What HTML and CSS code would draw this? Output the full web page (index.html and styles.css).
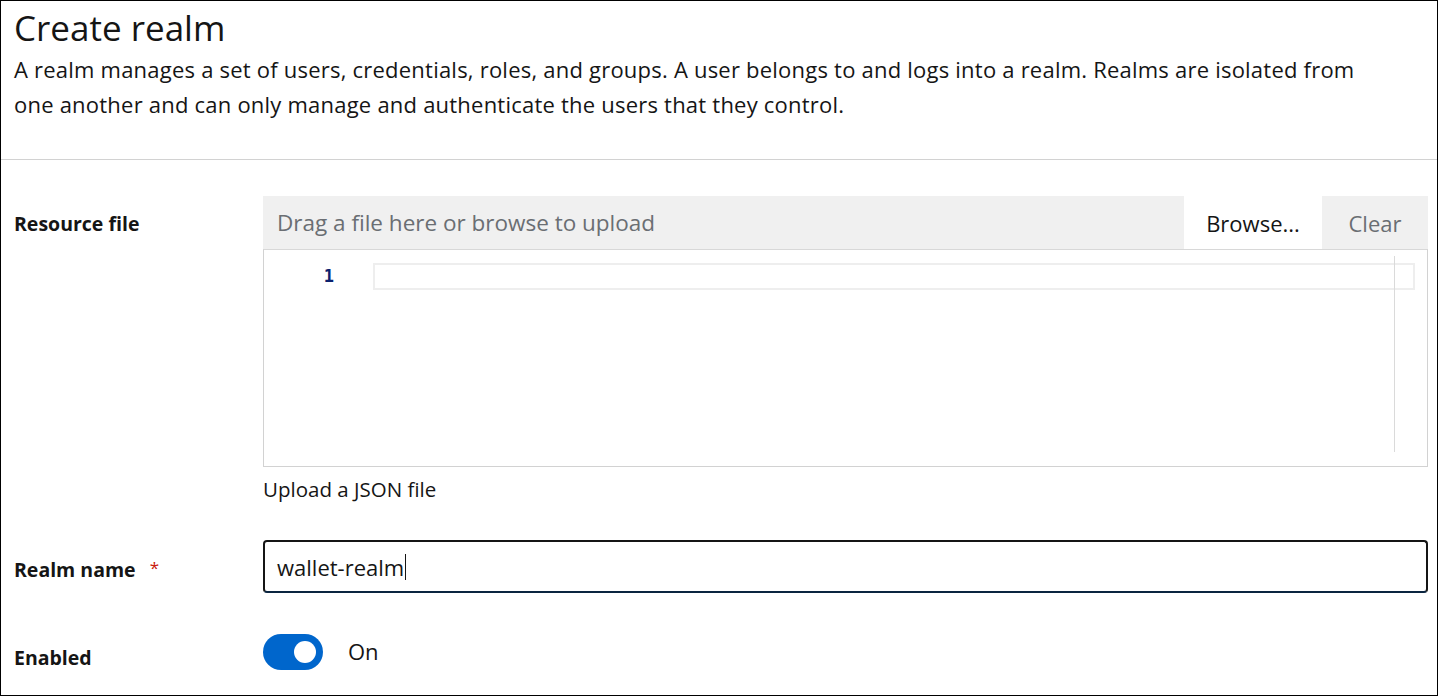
FILE: index.html
```html
<!DOCTYPE html>
<html lang="en">
<head>
<meta charset="utf-8">
<title>Create realm</title>
<link rel="stylesheet" href="styles.css">
</head>
<body>
<div class="frame">
  <header class="page-header">
    <h1 class="title">Create realm</h1>
    <p class="desc">A realm manages a set of users, credentials, roles, and groups. A user belongs to and logs into a realm. Realms are isolated from one another and can only manage and authenticate the users that they control.</p>
  </header>
  <form class="form">
    <div class="row row-file">
      <label class="label">Resource file</label>
      <div class="control">
        <div class="upload-bar">
          <span class="placeholder">Drag a file here or browse to upload</span>
          <button type="button" class="btn btn-browse">Browse...</button>
          <button type="button" class="btn btn-clear">Clear</button>
        </div>
        <div class="editor">
          <div class="gutter"><span class="ln">1</span></div>
          <div class="code"><div class="current-line"></div></div>
          <div class="ruler"></div>
        </div>
        <div class="helper">Upload a JSON file</div>
      </div>
    </div>
    <div class="row row-name">
      <label class="label">Realm name <span class="req">*</span></label>
      <div class="control">
        <div class="text-input"><span class="value">wallet-realm</span><span class="caret"></span></div>
      </div>
    </div>
    <div class="row row-enabled">
      <label class="label">Enabled</label>
      <div class="control switch-wrap">
        <span class="switch"><span class="knob"></span></span>
        <span class="switch-text">On</span>
      </div>
    </div>
  </form>
</div>
</body>
</html>
```
FILE: styles.css
```css
* { box-sizing: border-box; }
html, body { margin: 0; padding: 0; background: #fff; }
body {
  font-family: "Open Sans", "Liberation Sans", sans-serif;
  color: #151515;
}
.frame {
  width: 1438px;
  height: 696px;
  border: 1px solid #000;
  overflow: hidden;
  background: #fff;
}
.page-header {
  padding: 9px 9px 0 13px;
  height: 159px;
  border-bottom: 1px solid #d2d2d2;
}
.title {
  margin: 0;
  font-size: 35px;
  font-weight: 400;
  line-height: 36px;
  color: #151515;
}
.desc {
  margin: 6px 0 0;
  font-size: 22px;
  line-height: 35px;
  letter-spacing: 0.22px;
  max-width: 1375px;
  color: #151515;
}
.form {
  padding: 36px 9px 0 13px;
}
.row {
  display: grid;
  grid-template-columns: 249px 1fr;
}
.label {
  font-size: 19.5px;
  font-weight: 700;
  line-height: 27px;
  color: #151515;
}
.row-file .label { padding-top: 14px; }
.row-name { margin-top: 37px; }
.row-name .label { padding-top: 14px; }
.row-enabled { margin-top: 39px; }
.row-enabled .label { padding-top: 12px; }
.req {
  color: #c9190b;
  font-weight: 400;
  font-size: 17px;
  margin-left: 9px;
  vertical-align: 3px;
}
.upload-bar {
  display: flex;
  height: 53px;
  background: #f0f0f0;
  align-items: stretch;
}
.placeholder {
  flex: 1;
  display: flex;
  align-items: center;
  padding-left: 14px;
  font-size: 22.5px;
  color: #6a6e73;
}
.btn {
  border: 0;
  margin: 0;
  font-family: inherit;
  font-size: 22px;
  padding: 0;
  cursor: pointer;
}
.btn-browse {
  width: 138px;
  background: #fff;
  color: #151515;
}
.btn-clear {
  width: 106px;
  background: #f0f0f0;
  color: #6a6e73;
}
.editor {
  position: relative;
  display: flex;
  height: 218px;
  border: 1px solid #d2d2d2;
  border-top-color: #d8d8d8;
  padding-top: 13px;
}
.gutter {
  width: 109px;
  padding-right: 39px;
  text-align: right;
}
.ln {
  font-family: "DejaVu Sans Mono", monospace;
  font-size: 17px;
  font-weight: 700;
  line-height: 27px;
  color: #0b216f;
}
.code {
  flex: 1;
  padding-right: 12px;
}
.current-line {
  height: 27px;
  border: 2px solid #eeeeee;
}
.ruler {
  position: absolute;
  top: 6px;
  bottom: 14px;
  right: 32px;
  width: 1px;
  background: #dadada;
}
.helper {
  margin-top: 9px;
  font-size: 20.5px;
  line-height: 27px;
  color: #151515;
}
.text-input {
  height: 53px;
  border: 2px solid #151515;
  border-bottom-color: #0a2540;
  border-radius: 4px;
  display: flex;
  align-items: center;
  padding-left: 12px;
  font-size: 22px;
  color: #151515;
}
.caret {
  display: inline-block;
  width: 1px;
  height: 26px;
  background: #151515;
  margin-left: 1px;
}
.switch-wrap {
  display: flex;
  align-items: center;
}
.switch {
  position: relative;
  width: 60px;
  height: 36px;
  border-radius: 18px;
  background: #0066cc;
}
.knob {
  position: absolute;
  right: 7px;
  top: 7px;
  width: 22px;
  height: 22px;
  border-radius: 50%;
  background: #fff;
}
.switch-text {
  margin-left: 25px;
  font-size: 22px;
  line-height: 27px;
  color: #151515;
}
```
